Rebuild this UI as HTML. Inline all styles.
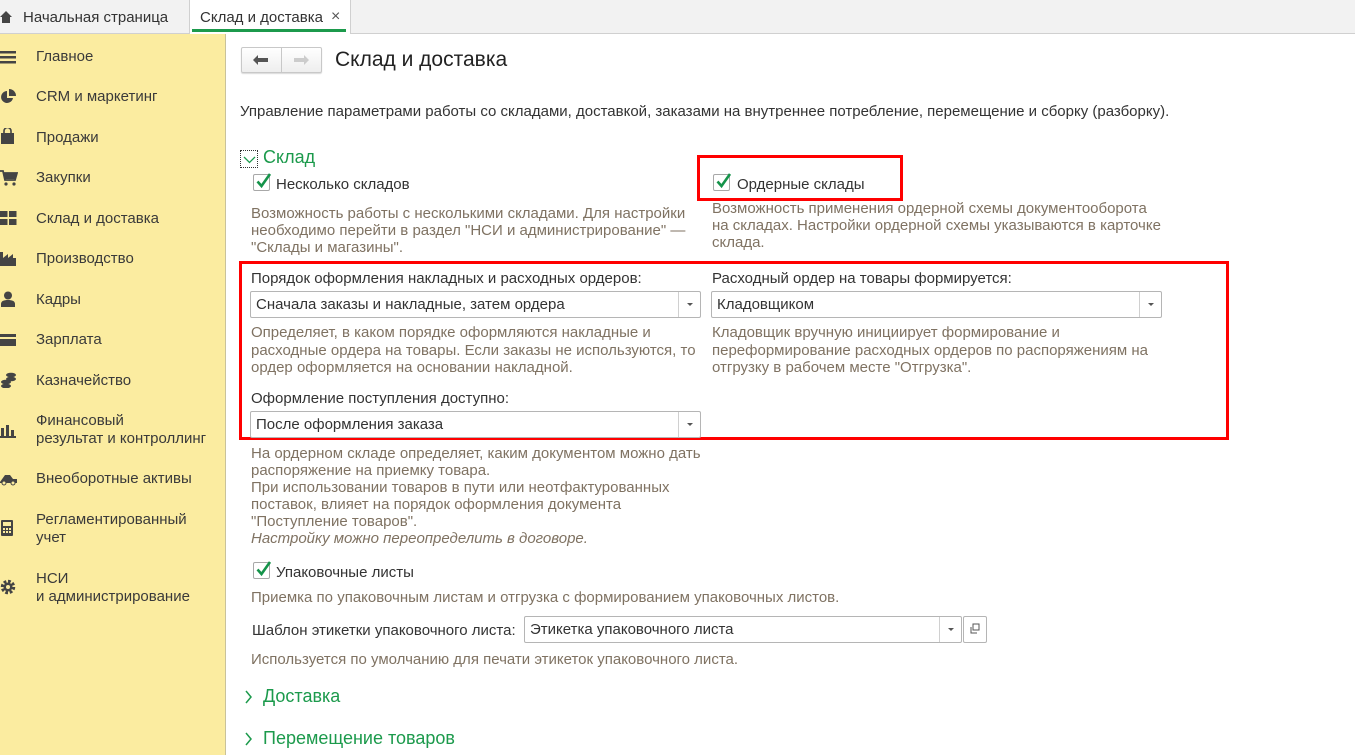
<!DOCTYPE html>
<html><head><meta charset="utf-8">
<style>
*{margin:0;padding:0;box-sizing:border-box}
body{width:1355px;height:755px;overflow:hidden;background:#fff;font-family:"Liberation Sans",Arial,sans-serif;color:#333;position:relative}
.t{position:absolute;white-space:nowrap;font-size:15px;line-height:17px}
.h{color:#7f7262}
.g{color:#1c9a4c}
.tabs{position:absolute;left:0;top:0;width:1355px;height:34px;background:#f2f2f2;border-bottom:1px solid #d0d0d0}
.side{position:absolute;left:0;top:34px;width:226px;height:721px;background:#fbeca0;border-right:1px solid #c9c29a}
.side .t{left:36px;font-size:15px;color:#3a3a3a}
.ic{position:absolute;left:0;width:18px;height:16px}
.cb{position:absolute;width:17px;height:17px;border:1px solid #a8a8a8;border-radius:2px;background:#fff}
.cb svg{position:absolute;left:1px;top:-3px}
.sel{position:absolute;height:27px;border:1px solid #b5b5b5;border-radius:2px;background:#fff;font-size:15px;line-height:25px;padding-left:5px;color:#333}
.sel .dd{position:absolute;right:0;top:0;width:22px;height:25px;border-left:1px solid #d0d0d0}
.sel .dd:after{content:"";position:absolute;left:8px;top:11px;border-left:3px solid transparent;border-right:3px solid transparent;border-top:3px solid #555}
.red{position:absolute;border:3px solid #f00}
</style></head><body>

<div class="tabs">
  <svg style="position:absolute;left:0;top:10px" width="12" height="14" viewBox="0 0 12 14"><path d="M6 1L0 7h2v6h8V7h2z" fill="#444"/></svg>
  <div class="t" style="left:23px;top:9px;color:#333">Начальная страница</div>
  <div style="position:absolute;left:189px;top:0;width:162px;height:34px;background:#fff;border-left:1px solid #d0d0d0;border-right:1px solid #d0d0d0"></div>
  <div class="t" style="left:200px;top:9px;color:#333">Склад и доставка</div>
  <div class="t" style="left:331px;top:8px;color:#555;font-size:16px">×</div>
  <div style="position:absolute;left:192px;top:29px;width:154px;height:3px;background:#1c9a4c"></div>
</div>

<div class="side">
  <svg class="ic" style="top:16px" viewBox="0 0 18 16"><rect x="0" y="1" width="16" height="2.5" fill="#444"/><rect x="0" y="6" width="16" height="2.5" fill="#444"/><rect x="0" y="11" width="16" height="2.5" fill="#444"/></svg>
  <div class="t" style="top:14px">Главное</div>
  <svg class="ic" style="top:55px" viewBox="0 0 18 16"><path d="M7 2a6 6 0 1 0 6 7H7z" fill="#444"/><path d="M9 0v7h7a7 7 0 0 0-7-7z" fill="#444"/></svg>
  <div class="t" style="top:54px">CRM и маркетинг</div>
  <svg class="ic" style="top:94px" viewBox="0 0 18 16"><rect x="1" y="5" width="13" height="11" fill="#444"/><path d="M4 6V3a3.5 3.5 0 0 1 7 0v3" stroke="#444" stroke-width="1.6" fill="none"/></svg>
  <div class="t" style="top:95px">Продажи</div>
  <svg class="ic" style="top:136px" viewBox="0 0 18 16"><path d="M0 1h3l2 9h10l2-7H4" fill="none" stroke="#444" stroke-width="1.8"/><rect x="4" y="3" width="12" height="6" fill="#444"/><circle cx="6" cy="14" r="1.6" fill="#444"/><circle cx="14" cy="14" r="1.6" fill="#444"/></svg>
  <div class="t" style="top:135px">Закупки</div>
  <svg class="ic" style="top:176px" viewBox="0 0 18 16"><rect x="0" y="1" width="7.5" height="6" fill="#444"/><rect x="9" y="1" width="7.5" height="6" fill="#444"/><rect x="0" y="9" width="7.5" height="6" fill="#444"/><rect x="9" y="9" width="7.5" height="6" fill="#444"/></svg>
  <div class="t" style="top:176px">Склад и доставка</div>
  <svg class="ic" style="top:216px" viewBox="0 0 18 16"><path d="M0 16V2h3v6l5-4v4l5-4v4h3v8z" fill="#444"/></svg>
  <div class="t" style="top:216px">Производство</div>
  <svg class="ic" style="top:257px" viewBox="0 0 18 16"><circle cx="8" cy="4.5" r="4" fill="#444"/><path d="M1 16v-3c0-3 3-4 7-4s7 1 7 4v3z" fill="#444"/></svg>
  <div class="t" style="top:257px">Кадры</div>
  <svg class="ic" style="top:298px" viewBox="0 0 18 16"><rect x="0" y="2" width="16" height="12" fill="#444"/><rect x="0" y="5" width="16" height="2" fill="#fbeca0"/></svg>
  <div class="t" style="top:297px">Зарплата</div>
  <svg class="ic" style="top:338px" viewBox="0 0 18 16"><ellipse cx="11" cy="3" rx="5" ry="2.3" fill="#444"/><ellipse cx="11" cy="7" rx="5" ry="2.3" fill="#444"/><ellipse cx="6" cy="10" rx="5" ry="2.3" fill="#444"/><ellipse cx="6" cy="14" rx="5" ry="2.3" fill="#444"/></svg>
  <div class="t" style="top:338px">Казначейство</div>
  <svg class="ic" style="top:388px" viewBox="0 0 18 16"><rect x="1" y="6" width="3" height="9" fill="#444"/><rect x="6" y="3" width="3" height="12" fill="#444"/><rect x="11" y="8" width="3" height="7" fill="#444"/><rect x="0" y="14" width="16" height="2" fill="#444"/></svg>
  <div class="t" style="top:378px">Финансовый</div>
  <div class="t" style="top:396px">результат и контроллинг</div>
  <svg class="ic" style="top:436px" viewBox="0 0 18 16"><path d="M0 12l5-7h5l3 4h4v4H0z" fill="#444"/><circle cx="4" cy="13" r="2" fill="#fbeca0" stroke="#444"/><circle cx="13" cy="13" r="2" fill="#fbeca0" stroke="#444"/></svg>
  <div class="t" style="top:436px">Внеоборотные активы</div>
  <svg class="ic" style="top:486px" viewBox="0 0 18 16"><rect x="1" y="0" width="12" height="16" rx="1" fill="#444"/><rect x="3" y="2" width="8" height="4" fill="#fbeca0"/><rect x="3" y="8" width="2" height="2" fill="#fbeca0"/><rect x="6" y="8" width="2" height="2" fill="#fbeca0"/><rect x="9" y="8" width="2" height="2" fill="#fbeca0"/><rect x="3" y="11" width="2" height="2" fill="#fbeca0"/><rect x="6" y="11" width="2" height="2" fill="#fbeca0"/><rect x="9" y="11" width="2" height="2" fill="#fbeca0"/></svg>
  <div class="t" style="top:477px">Регламентированный</div>
  <div class="t" style="top:495px">учет</div>
  <svg class="ic" style="top:545px" viewBox="0 0 18 16"><circle cx="8" cy="8" r="5.5" fill="none" stroke="#444" stroke-width="3.5" stroke-dasharray="2.6 1.7"/><circle cx="8" cy="8" r="4.5" fill="#444"/><circle cx="8" cy="8" r="2" fill="#fbeca0"/></svg>
  <div class="t" style="top:536px">НСИ</div>
  <div class="t" style="top:554px">и администрирование</div>
</div>

<div style="position:absolute;left:241px;top:47px;width:81px;height:26px;border:1px solid #c8c8c8;border-radius:2px;background:linear-gradient(#fff,#eee);box-shadow:0 1px 1px rgba(0,0,0,.15)"></div>
<div style="position:absolute;left:281px;top:47px;width:1px;height:26px;background:#c8c8c8"></div>
<svg style="position:absolute;left:253px;top:55px" width="16" height="10" viewBox="0 0 16 10"><path d="M0 5l5-5v3h10v4H5v3z" fill="#555"/></svg>
<svg style="position:absolute;left:293px;top:55px" width="16" height="10" viewBox="0 0 16 10"><path d="M16 5l-5-5v3H1v4h10v3z" fill="#ccc"/></svg>
<div class="t" style="left:335px;top:47px;font-size:21px;line-height:25px;color:#222">Склад и доставка</div>

<div class="t" style="left:240px;top:103px">Управление параметрами работы со складами, доставкой, заказами на внутреннее потребление, перемещение и сборку (разборку).</div>

<div style="position:absolute;left:240px;top:150px;width:18px;height:18px;border:1px dotted #333"></div>
<svg style="position:absolute;left:243px;top:155px" width="13" height="9" viewBox="0 0 13 9"><path d="M1 2l5.5 5.5L12 2" stroke="#1c9a4c" stroke-width="1.3" fill="none"/></svg>
<div class="t g" style="left:263px;top:147px;font-size:18px;line-height:21px">Склад</div>

<div class="cb" style="left:253px;top:174px"><svg width="17" height="18" viewBox="0 0 17 18"><path d="M2.5 9.5l4 4.5L15 2" stroke="#15934a" stroke-width="2.6" fill="none"/></svg></div>
<div class="t" style="left:276px;top:176px">Несколько складов</div>

<div class="cb" style="left:713px;top:174px"><svg width="17" height="18" viewBox="0 0 17 18"><path d="M2.5 9.5l4 4.5L15 2" stroke="#15934a" stroke-width="2.6" fill="none"/></svg></div>
<div class="t" style="left:737px;top:176px">Ордерные склады</div>
<div class="red" style="left:697px;top:155px;width:206px;height:46px"></div>

<div class="t h" style="left:251px;top:205px">Возможность работы с несколькими складами. Для настройки</div>
<div class="t h" style="left:251px;top:222px">необходимо перейти в раздел "НСИ и администрирование" —</div>
<div class="t h" style="left:251px;top:239px">"Склады и магазины".</div>

<div class="t h" style="left:712px;top:200px">Возможность применения ордерной схемы документооборота</div>
<div class="t h" style="left:712px;top:217px">на складах. Настройки ордерной схемы указываются в карточке</div>
<div class="t h" style="left:712px;top:234px">склада.</div>

<div class="red" style="left:239px;top:261px;width:990px;height:179px"></div>

<div class="t" style="left:251px;top:270px">Порядок оформления накладных и расходных ордеров:</div>
<div class="sel" style="left:250px;top:291px;width:451px">Сначала заказы и накладные, затем ордера<div class="dd"></div></div>
<div class="t h" style="left:251px;top:324px">Определяет, в каком порядке оформляются накладные и</div>
<div class="t h" style="left:251px;top:342px">расходные ордера на товары. Если заказы не используются, то</div>
<div class="t h" style="left:251px;top:359px">ордер оформляется на основании накладной.</div>

<div class="t" style="left:712px;top:270px">Расходный ордер на товары формируется:</div>
<div class="sel" style="left:711px;top:291px;width:451px">Кладовщиком<div class="dd"></div></div>
<div class="t h" style="left:712px;top:324px">Кладовщик вручную инициирует формирование и</div>
<div class="t h" style="left:712px;top:342px">переформирование расходных ордеров по распоряжениям на</div>
<div class="t h" style="left:712px;top:359px">отгрузку в рабочем месте "Отгрузка".</div>

<div class="t" style="left:251px;top:390px">Оформление поступления доступно:</div>
<div class="sel" style="left:250px;top:411px;width:451px">После оформления заказа<div class="dd"></div></div>

<div class="t h" style="left:251px;top:445px">На ордерном складе определяет, каким документом можно дать</div>
<div class="t h" style="left:251px;top:462px">распоряжение на приемку товара.</div>
<div class="t h" style="left:251px;top:479px">При использовании товаров в пути или неотфактурованных</div>
<div class="t h" style="left:251px;top:496px">поставок, влияет на порядок оформления документа</div>
<div class="t h" style="left:251px;top:513px">"Поступление товаров".</div>
<div class="t h" style="left:251px;top:530px;font-style:italic">Настройку можно переопределить в договоре.</div>

<div class="cb" style="left:253px;top:562px"><svg width="17" height="18" viewBox="0 0 17 18"><path d="M2.5 9.5l4 4.5L15 2" stroke="#15934a" stroke-width="2.6" fill="none"/></svg></div>
<div class="t" style="left:276px;top:564px">Упаковочные листы</div>
<div class="t h" style="left:251px;top:589px">Приемка по упаковочным листам и отгрузка с формированием упаковочных листов.</div>

<div class="t" style="left:252px;top:622px">Шаблон этикетки упаковочного листа:</div>
<div class="sel" style="left:524px;top:616px;width:438px">Этикетка упаковочного листа<div class="dd"></div></div>
<div style="position:absolute;left:963px;top:616px;width:24px;height:27px;border:1px solid #b5b5b5;border-radius:2px;background:#fff"></div>
<svg style="position:absolute;left:969px;top:623px" width="12" height="12" viewBox="0 0 12 12"><rect x="4" y="1" width="6" height="6" fill="none" stroke="#555"/><path d="M2 4v6h6" fill="none" stroke="#555"/></svg>
<div class="t h" style="left:251px;top:651px">Используется по умолчанию для печати этикеток упаковочного листа.</div>

<svg style="position:absolute;left:245px;top:690px" width="8" height="14" viewBox="0 0 8 14"><path d="M1 1l5 6-5 6" stroke="#1c9a4c" stroke-width="1.5" fill="none"/></svg>
<div class="t g" style="left:263px;top:686px;font-size:18px;line-height:21px">Доставка</div>
<svg style="position:absolute;left:245px;top:732px" width="8" height="14" viewBox="0 0 8 14"><path d="M1 1l5 6-5 6" stroke="#1c9a4c" stroke-width="1.5" fill="none"/></svg>
<div class="t g" style="left:263px;top:728px;font-size:18px;line-height:21px">Перемещение товаров</div>
</body></html>
